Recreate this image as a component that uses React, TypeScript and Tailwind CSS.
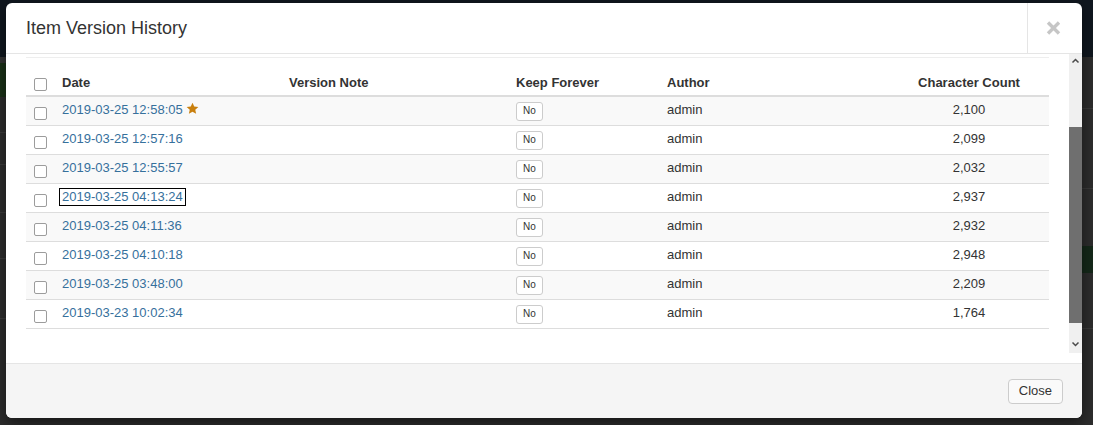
import React from "react";

const versions = [
  { date: "2019-03-25 12:58:05", count: "2,100", star: true },
  { date: "2019-03-25 12:57:16", count: "2,099" },
  { date: "2019-03-25 12:55:57", count: "2,032" },
  { date: "2019-03-25 04:13:24", count: "2,937", focused: true },
  { date: "2019-03-25 04:11:36", count: "2,932" },
  { date: "2019-03-25 04:10:18", count: "2,948" },
  { date: "2019-03-25 03:48:00", count: "2,209" },
  { date: "2019-03-23 10:02:34", count: "1,764" },
];

const cols = "grid grid-cols-[28px_227px_227px_151px_230px_160px]";

function Checkbox({ className = "" }: { className?: string }) {
  return (
    <span
      className={`block w-[13px] h-[13px] border border-[#9c9c9c] rounded-[2px] bg-white ${className}`}
    />
  );
}

function Star() {
  return (
    <svg width="13" height="13" viewBox="0 0 24 24" className="ml-[3px] -mt-[3px]">
      <path
        d="M12 1.5l3.2 7 7.6.8-5.7 5.1 1.6 7.5L12 18l-6.7 3.9 1.6-7.5L1.2 9.3l7.6-.8z"
        fill="#c9800f"
      />
    </svg>
  );
}

function Backdrop() {
  return (
    <div className="flex flex-col h-full">
      <div className="h-[57px] bg-[#10171f] shrink-0" />
      <div className="flex flex-1">
        <div className="w-[40px] flex flex-col">
          <div className="h-[6px] bg-[#353535]" />
          <div className="h-[34px] bg-[#1b3218]" />
          <div className="h-[36px] border-b border-[#3c3c3c]" />
          <div className="h-[32px] border-b border-[#3c3c3c]" />
          <div className="h-[48px] border-b border-[#3c3c3c]" />
          <div className="h-[46px] border-b border-[#3c3c3c]" />
          <div className="h-[60px] border-b border-[#3c3c3c]" />
          <div className="flex-1" />
        </div>
        <div className="flex-1" />
        <div className="w-[40px] flex flex-col">
          <div className="h-[52px] border-b border-[#3a3a3a]" />
          <div className="h-[80px] border-b border-[#3a3a3a]" />
          <div className="h-[57px]" />
          <div className="h-[27px] bg-[#15291a]" />
          <div className="h-[56px] border-b border-[#3a3a3a]" />
          <div className="flex-1" />
        </div>
      </div>
    </div>
  );
}

function ScrollBar() {
  return (
    <div className="w-[13px] h-[299px] bg-[#f0f0f0] flex flex-col items-center">
      <svg width="9" height="14" viewBox="0 0 9 14" className="shrink-0">
        <polyline points="1.5,8.5 4.5,5.5 7.5,8.5" fill="none" stroke="#4a4a4a" strokeWidth="1.5" />
      </svg>
      <div className="h-[59px] shrink-0" />
      <div className="w-[13px] h-[196px] bg-[#6f6f6f] shrink-0" />
      <div className="flex-1" />
      <svg width="9" height="14" viewBox="0 0 9 14" className="shrink-0 mb-[2px]">
        <polyline points="1.5,5.5 4.5,8.5 7.5,5.5" fill="none" stroke="#4a4a4a" strokeWidth="1.5" />
      </svg>
    </div>
  );
}

export default function App() {
  return (
    <div className="relative w-[1093px] h-[425px] overflow-hidden bg-[#2d2d2d] font-['Liberation_Sans',Arial,sans-serif] text-[#333]">
      <Backdrop />

      <div className="absolute left-[6px] top-[3px] w-[1076px] h-[415px] bg-white rounded-[6px] overflow-hidden shadow-[0_5px_15px_rgba(0,0,0,0.5)] flex flex-col">
        {/* header */}
        <div className="h-[51px] shrink-0 flex border-b border-[#e5e5e5]">
          <h4 className="flex-1 flex items-center pl-[20px] text-[18px]">Item Version History</h4>
          <div className="w-[55px] border-l border-[#e5e5e5] flex items-center justify-center pr-[4px]">
            <svg width="15" height="14" viewBox="0 0 15 14">
              <path d="M2 1.5l11 11M13 1.5l-11 11" stroke="#c6c6c6" strokeWidth="3.4" />
            </svg>
          </div>
        </div>

        {/* body */}
        <div className="h-[309px] shrink-0 flex">
          <div className="flex-1 px-[20px] text-[13px]">
            <div className="mt-[3px] border-t border-[#eee]" />
            <div className={`${cols} mt-[10px] h-[29px] border-b-2 border-[#ddd] font-bold items-center`}>
              <div className="pl-[8px] pt-[6px]">
                <Checkbox />
              </div>
              <div className="pl-[8px] pt-[2px]">Date</div>
              <div className="pl-[8px] pt-[2px]">Version Note</div>
              <div className="pl-[8px] pt-[2px]">Keep Forever</div>
              <div className="pl-[8px] pt-[2px]">Author</div>
              <div className="text-center pt-[2px]">Character Count</div>
            </div>
            {versions.map((v, i) => (
              <div
                key={v.date}
                className={`${cols} h-[29px] border-b border-[#ddd] leading-[18px] ${i % 2 === 0 ? "bg-[#f9f9f9]" : "bg-white"}`}
              >
                <div className="pl-[8px] pt-[10px]">
                  <Checkbox />
                </div>
                <div className="pl-[8px] pt-[4px] flex items-center h-[22px] self-start">
                  <span
                    className={
                      v.focused
                        ? "text-[#36709c] px-[3px] -ml-[3px] shadow-[inset_0_0_0_1px_#000]"
                        : "text-[#36709c]"
                    }
                  >
                    {v.date}
                  </span>
                  {v.star && <Star />}
                </div>
                <div />
                <div className="pl-[8px] pt-[4px]">
                  <span className="inline-flex items-center h-[19px] px-[6px] border border-[#ccc] rounded-[3px] bg-white text-[10px] leading-none">
                    No
                  </span>
                </div>
                <div className="pl-[8px] pt-[4px]">admin</div>
                <div className="pt-[4px] text-center">{v.count}</div>
              </div>
            ))}
          </div>
          <ScrollBar />
        </div>

        {/* footer */}
        <div className="flex-1 border-t border-[#e5e5e5] bg-[#f5f5f5] flex items-center justify-end pr-[19px]">
          <button className="h-[25px] px-[10px] border border-[#ccc] rounded-[4px] bg-[#fafafa] text-[13px] text-[#333]">
            Close
          </button>
        </div>
      </div>
    </div>
  );
}
